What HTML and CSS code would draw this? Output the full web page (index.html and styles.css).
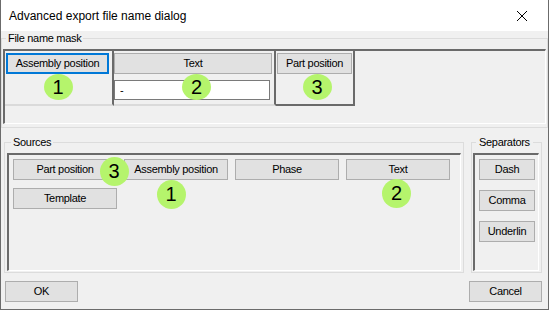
FILE: index.html
```html
<!DOCTYPE html>
<html>
<head>
<meta charset="utf-8">
<link rel="stylesheet" href="styles.css">
</head>
<body>
<div class="window">
  <div class="titlebar">
    <span class="title">Advanced export file name dialog</span>
    <svg class="close" viewBox="0 0 10 10" width="10" height="10"><path d="M0 0L10 10M10 0L0 10" stroke="#000" stroke-width="1" fill="none"/></svg>
  </div>
  <div class="body">
    <fieldset class="group mask-group">
      <legend>File name mask</legend>
      <div class="sunken mask-panel">
        <div class="cols">
          <div class="col col1"><button class="btn focused w-asm">Assembly position</button></div>
          <div class="col col2"><button class="btn w-text">Text</button><input class="txt" type="text" value="-"></div>
          <div class="col col3"><button class="btn w-part">Part position</button></div>
        </div>
      </div>
    </fieldset>
    <div class="mid">
      <fieldset class="group sources">
        <legend>Sources</legend>
        <div class="sunken src-panel">
          <button class="btn">Part position</button>
          <button class="btn">Assembly position</button>
          <button class="btn">Phase</button>
          <button class="btn">Text</button>
          <button class="btn">Template</button>
        </div>
      </fieldset>
      <fieldset class="group seps">
        <legend>Separators</legend>
        <div class="sunken sep-panel">
          <button class="btn w-sep">Dash</button>
          <button class="btn w-sep">Comma</button>
          <button class="btn w-sep">Underlin</button>
        </div>
      </fieldset>
    </div>
    <div class="footer">
      <button class="btn w-foot">OK</button>
      <button class="btn w-foot">Cancel</button>
    </div>
  </div>
  <div class="badge flat b-m1">1</div>
  <div class="badge flat b-m2">2</div>
  <div class="badge flat b-m3">3</div>
  <div class="badge b-s3">3</div>
  <div class="badge b-s1">1</div>
  <div class="badge b-s2">2</div>
</div>
</body>
</html>
```
FILE: styles.css
```css
html, body {
  margin: 0;
  padding: 0;
  background: #fff;
}

.window {
  position: relative;
  width: 549px;
  height: 310px;
  box-sizing: border-box;
  border: 1px solid #6b6b6b;
  border-top: none;
  background: #f0f0f0;
  font-family: "Liberation Sans", Arial, sans-serif;
  font-size: 11px;
  letter-spacing: -0.3px;
  color: #000;
  display: flex;
  flex-direction: column;
  overflow: hidden;
}

.titlebar {
  height: 31px;
  flex: none;
  background: #fff;
  display: flex;
  align-items: center;
  padding-left: 8px;
  padding-right: 21px;
  font-size: 12px;
  letter-spacing: 0;
}

.title {
  flex: 1;
}

.close {
  display: block;
}

.body {
  flex: 1;
  display: flex;
  flex-direction: column;
}

fieldset.group {
  margin: 0;
  padding: 0;
  min-width: 0;
  border: 1px solid #dcdcdc;
}

legend {
  padding: 0 2px;
  height: 14px;
  line-height: 14px;
  font-size: 11px;
}

.sunken {
  box-sizing: border-box;
  border-style: solid;
  border-width: 2px 1px 1px 2px;
  border-color: #6a6a6a #fff #fff #6a6a6a;
}

.mask-group {
  margin: 0 1px 0 2px;
}

.mask-group legend {
  margin-left: 4px;
}

.mask-panel {
  margin: 4px 1px 3px 1px;
  height: 75px;
}

.cols {
  display: flex;
  height: 55px;
}

.col {
  box-sizing: border-box;
  height: 55px;
  border-right: 2px solid #6a6a6a;
  border-bottom: 2px solid #dadada;
  display: flex;
  flex-direction: column;
  align-items: flex-start;
  padding-top: 2px;
}

.col1 {
  width: 109px;
  padding-left: 1px;
}

.col2 {
  width: 162px;
}

.col3 {
  width: 79px;
  padding-left: 1px;
  border-bottom-color: #6a6a6a;
}

.btn {
  box-sizing: border-box;
  height: 21px;
  margin: 0;
  padding: 0;
  border: 1px solid #adadad;
  background: #e1e1e1;
  font-family: inherit;
  font-size: 11px;
  letter-spacing: -0.3px;
  color: #000;
  line-height: 19px;
  text-align: center;
  white-space: nowrap;
  overflow: hidden;
}

.focused {
  border: 2px solid #0078d7;
  line-height: 17px;
}

.w-asm { width: 103px; }
.w-text { width: 158px; }
.w-part { width: 75px; }
.w-sep { width: 56px; }
.w-foot { width: 73px; }

.txt {
  margin: 6px 0 0 0;
  width: 156px;
  height: 20px;
  box-sizing: border-box;
  border: 1px solid #7a7a7a;
  background: #fff;
  font-family: inherit;
  font-size: 11px;
  color: #000;
  padding: 0 0 0 5px;
  outline: none;
}

.mid {
  display: flex;
  gap: 7px;
  margin-top: 7px;
  padding-left: 3px;
}

.sources {
  width: 460px;
  box-sizing: border-box;
}

.sources legend {
  margin-left: 6px;
}

.src-panel {
  margin: 4px 2px 1px 2px;
  height: 118px;
  padding: 4px 0 0 4px;
  display: grid;
  grid-template-columns: repeat(4, 104px);
  column-gap: 7px;
  row-gap: 8px;
  align-content: start;
}

.seps {
  width: 71px;
  box-sizing: border-box;
}

.seps legend {
  margin-left: 4px;
  padding: 0 3px;
}

.sep-panel {
  margin: 4px 2px 1px 1px;
  height: 118px;
  padding: 4px 0 0 4px;
  display: flex;
  flex-direction: column;
  gap: 10px;
}

.footer {
  display: flex;
  justify-content: space-between;
  margin-top: 8px;
  padding: 0 6px 0 4px;
}

.badge {
  position: absolute;
  width: 29px;
  height: 29px;
  border-radius: 50%;
  background: #b5f46c;
  color: #000;
  font-size: 20px;
  letter-spacing: 0;
  line-height: 1;
  display: flex;
  align-items: center;
  justify-content: center;
}

.badge.flat {
  height: 26px;
}

.b-m1 { left: 42.5px; top: 74px; }
.b-m2 { left: 181px; top: 74px; }
.b-m3 { left: 301.5px; top: 74px; }
.b-s3 { left: 98.5px; top: 156.5px; }
.b-s1 { left: 155.5px; top: 179.5px; }
.b-s2 { left: 381px; top: 178.5px; }
```
